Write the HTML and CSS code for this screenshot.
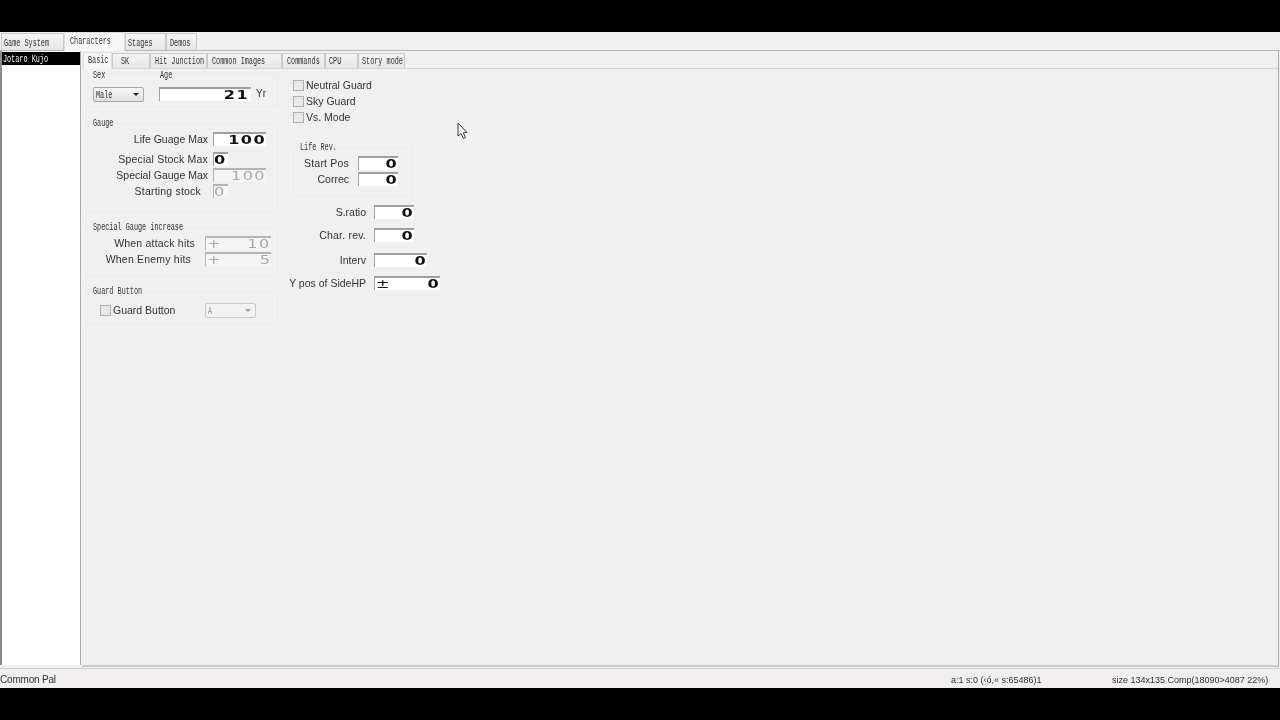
FILE: index.html
```html
<!DOCTYPE html>
<html lang="en">

<head>
    <meta charset="UTF-8">
    <title>Characters</title>
    <link rel="stylesheet" href="styles.css">
</head>

<body>

    <div class="window">
        <div class="top-tabs">
            <div class="tab t-game"><span class="mini">Game System</span></div>
            <div class="tab t-chars active"><span class="mini">Characters</span></div>
            <div class="tab t-stages"><span class="mini">Stages</span></div>
            <div class="tab t-demos"><span class="mini">Demos</span></div>
        </div>

        <div class="main">
            <div class="char-list">
                <div class="char-item"><span class="mini">Jotaro Kujo</span></div>
            </div>

            <div class="panel">
                <div class="sub-tabs">
                    <div class="tab s-basic active"><span class="mini">Basic</span></div>
                    <div class="tab s-sk"><span class="mini">SK</span></div>
                    <div class="tab s-hit"><span class="mini">Hit Junction</span></div>
                    <div class="tab s-images"><span class="mini">Common Images</span></div>
                    <div class="tab s-commands"><span class="mini">Commands</span></div>
                    <div class="tab s-cpu"><span class="mini">CPU</span></div>
                    <div class="tab s-story"><span class="mini">Story mode</span></div>
                </div>

                <div class="page">
                    <div class="col-left">
                        <div class="group group-sex">
                            <div class="sex-col">
                                <div class="group-title"><span class="mini">Sex</span></div>
                                <div class="combo combo-sex"><span class="mini">Male</span><i class="arrow"></i></div>
                            </div>
                            <div class="age-col">
                                <div class="group-title"><span class="mini">Age</span></div>
                                <div class="age-row">
                                    <div class="field f-age"><span class="num">21</span></div>
                                    <span class="unit">Yr</span>
                                </div>
                            </div>
                        </div>

                        <div class="group group-gauge">
                            <div class="group-title"><span class="mini">Gauge</span></div>
                            <div class="row r-first"><label class="lbl w-gauge">Life Guage Max</label><div class="field f-gauge"><span class="num">100</span></div></div>
                            <div class="row r-stock"><label class="lbl w-gauge wide">Special Stock Max</label><div class="field f-stock"><span class="num num-left">0</span></div></div>
                            <div class="row"><label class="lbl w-gauge">Special Gauge Max</label><div class="field f-gauge off"><span class="num">100</span></div></div>
                            <div class="row"><label class="lbl w-gauge short wide">Starting stock</label><div class="field f-stock off"><span class="num num-left">0</span></div></div>
                        </div>

                        <div class="group group-inc">
                            <div class="group-title"><span class="mini">Special Gauge increase</span></div>
                            <div class="row r-first"><label class="lbl w-inc wide">When attack hits</label><div class="field f-inc off"><span class="num num-left">+</span><span class="num">10</span></div></div>
                            <div class="row"><label class="lbl w-inc short wide">When Enemy hits</label><div class="field f-inc off"><span class="num num-left">+</span><span class="num">5</span></div></div>
                        </div>

                        <div class="group group-guard">
                            <div class="group-title"><span class="mini">Guard Button</span></div>
                            <div class="guard-row">
                                <div class="check"><i class="box"></i><span>Guard Button</span></div>
                                <div class="combo combo-guard"><span class="mini">A</span><i class="arrow"></i></div>
                            </div>
                        </div>
                    </div>

                    <div class="col-right">
                        <div class="checks">
                            <div class="check"><i class="box"></i><span>Neutral Guard</span></div>
                            <div class="check"><i class="box"></i><span>Sky Guard</span></div>
                            <div class="check"><i class="box"></i><span>Vs. Mode</span></div>
                        </div>

                        <div class="group group-life">
                            <div class="group-title"><span class="mini">Life Rev.</span></div>
                            <div class="row r-first"><label class="lbl w-life wide">Start Pos</label><div class="field f-life"><span class="num">0</span></div></div>
                            <div class="row"><label class="lbl w-life">Correc</label><div class="field f-life"><span class="num">0</span></div></div>
                        </div>

                        <div class="misc">
                            <div class="row r-ratio"><label class="lbl w-misc">S.ratio</label><div class="field f-life"><span class="num">0</span></div></div>
                            <div class="row r-rev"><label class="lbl w-misc wide">Char. rev.</label><div class="field f-life"><span class="num">0</span></div></div>
                            <div class="row r-interv"><label class="lbl w-misc">Interv</label><div class="field f-interv"><span class="num">0</span></div></div>
                            <div class="row r-ypos"><label class="lbl w-misc">Y pos of SideHP</label><div class="field f-ypos"><span class="num num-left">±</span><span class="num">0</span></div></div>
                        </div>
                    </div>
                </div>
            </div>
        </div>

        <div class="status">
            <div class="st-left">Common Pal</div>
            <div class="st-mid">a:1 s:0 (‹ó,« s:65486)1</div>
            <div class="st-right">size 134x135 Comp(18090&gt;4087 22%)</div>
        </div>

        <!-- mouse pointer -->
        <svg class="pointer" width="12" height="18" viewBox="0 0 12 18">
            <path d="M1 1 L1 14 L4 11.5 L6.5 16.5 L8.5 15.5 L6.2 10.8 L10 10.5 Z" fill="#f4f4f4" stroke="#3a3a3a" stroke-width="1"/>
        </svg>
    </div>

</body>

</html>
```

FILE: styles.css
```css
html, body {
    height: 100%;
    overflow: hidden;
}

body {
    margin: 0;
    background: #000;
    font-family: "Liberation Sans", Arial, sans-serif;
    font-size: 10.5px;
    color: #333;
}

.window {
    position: relative;
    margin-top: 32px;
    width: 1280px;
    height: 656px;
    background: #f0f0f0;
    display: flex;
    flex-direction: column;
    filter: blur(0.4px);
}

/* squeezed bitmap-like caption font */
.mini {
    display: inline-block;
    font-family: "Liberation Mono", monospace;
    font-size: 11px;
    line-height: 12px;
    white-space: nowrap;
    transform: scaleX(0.62);
    transform-origin: left center;
    color: #333;
}

/* Tabs */
.top-tabs {
    display: flex;
    height: 18px;
    flex: none;
    align-items: flex-end;
    padding-left: 1px;
}

.tab {
    box-sizing: border-box;
    height: 17px;
    padding: 2px 0 0 3px;
    background: linear-gradient(#f4f4f4, #e6e6e6);
    border: 1px solid #cacaca;
    border-bottom: none;
    overflow: hidden;
}

.tab.active {
    position: relative;
    height: 19px;
    margin-bottom: -1px;
    background: #f6f6f6;
    padding-top: 1px;
    padding-left: 5px;
    border-color: #dcdcdc;
}

.t-game { width: 63px; padding-left: 2px; }
.t-chars { width: 61px; }
.t-stages { width: 41px; padding-left: 2px; }
.t-demos { width: 31px; }

.main {
    flex: 1;
    display: flex;
    min-height: 0;
    border-top: 1px solid #b8b8b8;
}

.char-list {
    box-sizing: border-box;
    width: 81px;
    margin-bottom: 3px;
    background: #fff;
    border-left: 2px solid #8c8c8c;
    border-right: 1px solid #a8a8a8;
    padding-top: 1px;
}

.char-item {
    height: 13px;
    background: #000;
    padding-left: 1px;
    line-height: 12px;
}

.char-item .mini {
    color: #fff;
}

.panel {
    flex: 1;
    margin-left: 1px;
    margin-right: 1px;
    margin-bottom: 1px;
    display: flex;
    flex-direction: column;
    min-width: 0;
    border-right: 1px solid #a8a8a8;
    border-bottom: 2px solid #c8c8c8;
}

.sub-tabs {
    display: flex;
    align-items: flex-end;
    height: 17px;
    flex: none;
    padding-left: 1px;
    border-bottom: 1px solid #d4d4d4;
}

.sub-tabs .tab {
    height: 15px;
    padding-top: 0;
}

.sub-tabs .tab.active {
    height: 17px;
    margin-bottom: -1px;
    padding-left: 4px;
}

.s-basic { width: 29px; }
.s-sk { width: 38px; padding-left: 8px; }
.s-hit { width: 57px; padding-left: 4px; }
.s-images { width: 75px; padding-left: 4px; }
.s-commands { width: 43px; padding-left: 4px; }
.s-cpu { width: 33px; }
.s-story { width: 47px; }

/* Form page */
.page {
    flex: 1;
    display: flex;
    padding-left: 5px;
}

.col-left {
    width: 191px;
    padding-top: 4px;
}

.col-right {
    margin-left: 15px;
    padding-top: 8px;
}

.group {
    box-sizing: border-box;
    border: 1px solid #eaeaea;
}

.group-title {
    height: 12px;
    line-height: 12px;
    margin-top: -8px;
    padding-left: 5px;
}

.group-sex {
    display: flex;
    height: 34px;
}

.group-sex .group-title {
    margin-top: -6px;
}

.sex-col {
    width: 67px;
}

.combo {
    position: relative;
    box-sizing: border-box;
    height: 15px;
    background: linear-gradient(#f6f6f6, #e0e0e0);
    border: 1px solid #a8a8a8;
    border-radius: 2px;
    padding-left: 2px;
    line-height: 12px;
}

.combo-sex {
    width: 51px;
    margin: 7px 0 0 5px;
}

.arrow {
    position: absolute;
    right: 4px;
    top: 5px;
    border: 3px solid transparent;
    border-top: 3px solid #222;
    border-bottom: none;
}

.age-row {
    display: flex;
    align-items: center;
    margin-top: 7px;
    margin-left: 4px;
}

.unit {
    margin-left: 5px;
    font-size: 10px;
    line-height: 12px;
}

.field {
    box-sizing: border-box;
    height: 14px;
    flex: none;
    display: flex;
    justify-content: space-between;
    align-items: center;
    background: #fff;
    border-top: 2px solid #a0a0a0;
    border-left: 1px solid #a0a0a0;
    overflow: hidden;
}

.field .num:only-child {
    margin-left: auto;
}

.field .num-left:only-child {
    margin-left: 0;
}

.num {
    display: inline-block;
    font-family: "DejaVu Sans", sans-serif;
    font-weight: bold;
    font-size: 11.5px;
    line-height: 12px;
    color: #111;
    letter-spacing: 1px;
    transform: scaleX(1.4);
    transform-origin: right center;
}

.num-left {
    font-weight: normal;
    transform-origin: left center;
    margin-left: 1px;
}

.f-age { width: 92px; padding-right: 2px; }
.f-gauge { width: 53px; }
.f-stock { width: 15px; }
.f-stock .num { font-weight: bold; }
.f-inc { width: 66px; }
.f-life { width: 40px; }
.f-interv { width: 53px; }
.f-ypos { width: 66px; }

.field.off {
    background: #f5f5f5;
    border-color: #b4b4b4;
}

.field.off .num {
    color: #a8a8a8;
    font-weight: normal;
}

.row {
    display: flex;
    align-items: center;
    height: 16px;
}

.r-first { margin-top: 3px; }
.r-stock { margin-top: 4px; }

.lbl {
    box-sizing: border-box;
    text-align: right;
    white-space: nowrap;
}

.lbl.wide {
    letter-spacing: 0.2px;
}

.w-gauge { width: 120px; margin-right: 5px; }
.w-gauge.short { padding-right: 7px; }
.w-inc { width: 107px; margin-right: 10px; }
.w-inc.short { padding-right: 4px; }
.w-life { width: 55px; margin-right: 9px; }
.w-misc { width: 80px; margin-right: 8px; }

.group-gauge {
    height: 89px;
    margin-top: 16px;
}

.group-inc {
    height: 50px;
    margin-top: 15px;
}

.group-guard {
    height: 34px;
    margin-top: 14px;
}

.guard-row {
    display: flex;
    align-items: center;
    margin-top: 6px;
    padding-left: 12px;
}

.combo-guard {
    width: 51px;
    margin-left: 30px;
    background: #f2f2f2;
    border-color: #c8c8c8;
}

.combo-guard .mini { color: #999; }
.combo-guard .arrow { border-top-color: #999; }

.check {
    display: flex;
    align-items: center;
    height: 16px;
    white-space: nowrap;
}

.box {
    box-sizing: border-box;
    width: 11px;
    height: 11px;
    margin-right: 2px;
    background: #e8e8e8;
    border: 1px solid #b0b0b0;
}

.group-life {
    width: 120px;
    height: 50px;
    margin-top: 22px;
}

.group-life .group-title {
    padding-left: 6px;
}

.misc {
    margin-top: 7px;
    margin-left: -7px;
}

.r-rev { margin-top: 7px; }
.r-interv { margin-top: 9px; }
.r-ypos { margin-top: 7px; }

/* Status bar */
.status {
    box-sizing: border-box;
    flex: none;
    height: 20px;
    padding-top: 2px;
    display: flex;
    align-items: center;
    border-top: 1px solid #cfcfcf;
    background: #f0eeee;
    font-size: 9px;
    white-space: nowrap;
}

.st-left {
    width: 951px;
    font-size: 10px;
    letter-spacing: -0.2px;
}

.st-mid {
    width: 161px;
}

.pointer {
    position: absolute;
    left: 457px;
    top: 90px;
}
```
